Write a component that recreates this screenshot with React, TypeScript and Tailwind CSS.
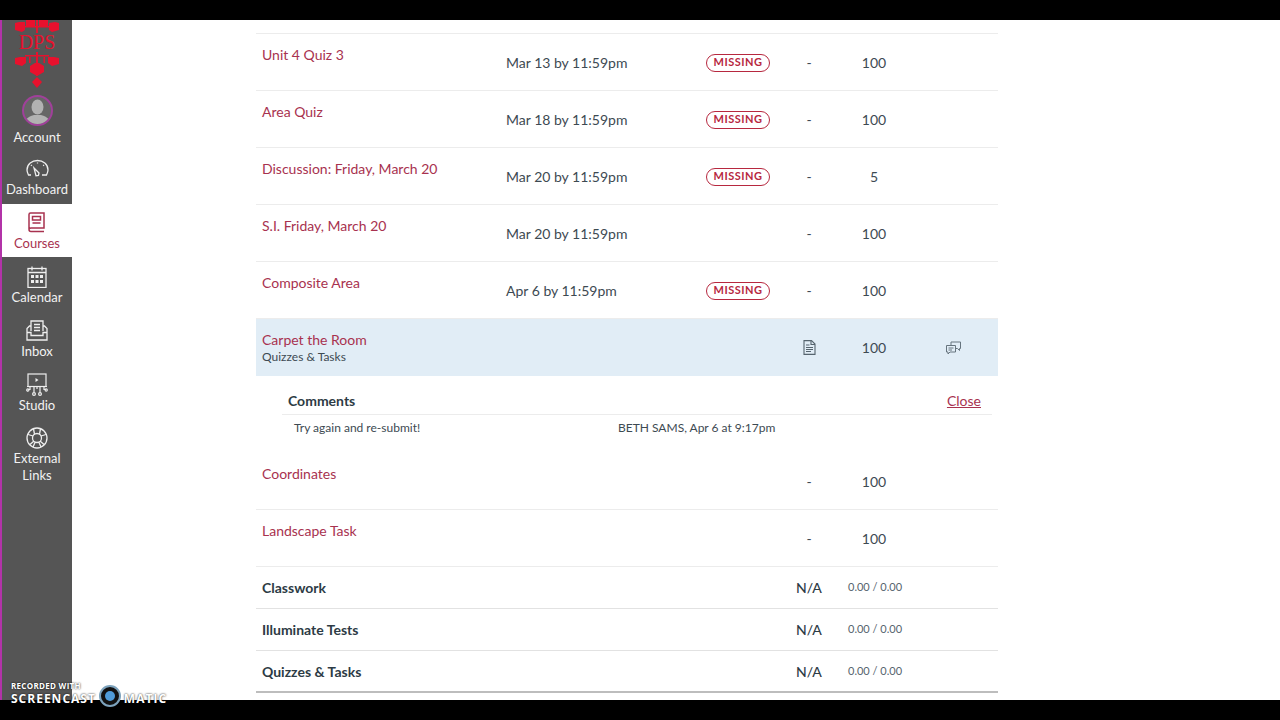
import React from "react";

const rowsTop = [
  { name: "Unit 4 Quiz 3", due: "Mar 13 by 11:59pm", missing: true, points: "100" },
  { name: "Area Quiz", due: "Mar 18 by 11:59pm", missing: true, points: "100" },
  { name: "Discussion: Friday, March 20", due: "Mar 20 by 11:59pm", missing: true, points: "5" },
  { name: "S.I. Friday, March 20", due: "Mar 20 by 11:59pm", missing: false, points: "100" },
  { name: "Composite Area", due: "Apr 6 by 11:59pm", missing: true, points: "100" },
];

const rowsBottom = [
  { name: "Coordinates", due: "", missing: false, points: "100" },
  { name: "Landscape Task", due: "", missing: false, points: "100" },
];

const groups = ["Classwork", "Illuminate Tests", "Quizzes & Tasks"];

const DpsLogo = () => (
  <svg width="44" height="70" viewBox="0 0 44 70" fill="#e8112d">
    <path d="M11 0h9v6h-9zM24 0h9v6h-9z" />
    <path d="M0 3l4-1h6v8l-3 2-7-2zM34 3l6-1 4 1v7l-7 2-3-2z" />
    <path d="M21 0h2v13h-2zM10 6h24v1.500H10z" />
    <text x="22" y="29" textAnchor="middle" fontSize="20" fontFamily="'Liberation Serif', serif">DPS</text>
    <path d="M0 38l5-1h6v6l-4 3-7-2zM33 37h6l5 1v6l-7 2-4-3z" />
    <path d="M10 35h24v1.500H10zM21 32h2v24h-2zM14 37h1.500v6H14zM28.500 37h1.500v6h-1.500z" />
    <path d="M15 46l5-3h4l5 3v6l-7 4-7-4z" />
    <path d="M22 57l5 5-5 6-5-6z" />
  </svg>
);

const Avatar = () => (
  <div className="w-[31px] h-[31px] rounded-full border-2 border-[#a0409a] bg-[#666] overflow-hidden">
    <svg width="27" height="27" viewBox="0 0 27 27" fill="#b2b2b2">
      <ellipse cx="13.500" cy="10" rx="6" ry="7.500" />
      <path d="M1 27c0-6 5-8 9-9h7c4 1 9 3 9 9z" />
    </svg>
  </div>
);

const DashIcon = () => (
  <svg width="23" height="20" viewBox="0 0 23 20" fill="none" stroke="#eee" strokeWidth="1.300">
    <path d="M5 16H2.500C1.500 14 1 12.500 1 11 1 5 6 1.500 11.500 1.500S22 5 22 11c0 1.500-.5 3-1.500 5H16" />
    <path d="M8 9l5 5-.5 2.500-2.500.2z" />
    <path d="M11.500 3.500v1M5 6l.8.8M18 6l-.8.8" />
  </svg>
);

const BookIcon = () => (
  <svg width="18" height="21" viewBox="0 0 18 21" fill="none" stroke="#a8324f" strokeWidth="1.500">
    <path d="M1 17V2.500C1 1.500 1.500 1 2.500 1H16v15H3c-1.500 0-2 .5-2 1.500S1.500 19.500 3 19.500H16" />
    <path d="M4.500 4.500h8v3.500h-8zM4.500 11h8" />
  </svg>
);

const CalIcon = () => (
  <svg width="20" height="22" viewBox="0 0 20 22" fill="none" stroke="#eee" strokeWidth="1.300">
    <rect x="1" y="2.500" width="18" height="19" />
    <path d="M1 6.500h18M5 .5v4M15 .5v4" />
    <path fill="#eee" stroke="none" d="M4 9h3v3H4zM8.500 9h3v3h-3zM13 9h3v3h-3zM4 14h3v3H4zM8.500 14h3v3h-3zM13 14h3v3h-3z" />
  </svg>
);

const InboxIcon = () => (
  <svg width="22" height="21" viewBox="0 0 22 21" fill="none" stroke="#eee" strokeWidth="1.300">
    <path d="M5 11V1h12v10" />
    <path d="M8 4.500h6M8 7.500h6M8 10.500h6" />
    <path d="M5 6H3.500L1 8.500V20h20V8.500L18.500 6H17" />
    <path d="M1 12.500h4v3h12v-3h4" />
  </svg>
);

const StudioIcon = () => (
  <svg width="22" height="23" viewBox="0 0 22 23" fill="none" stroke="#eee" strokeWidth="1.200">
    <rect x="2" y="1" width="18" height="12.500" />
    <path d="M9.500 5l3 2-3 2z" fill="#eee" stroke="none" />
    <path d="M1 13.500h20M4 14v2.500H2.500M8 14v5.500M14 14v5.500M18 14v2.500h1.500M11 14v2" />
    <circle cx="1.800" cy="17" r="1.100" />
    <circle cx="8" cy="21" r="1.400" />
    <circle cx="14" cy="21" r="1.400" />
    <circle cx="20.200" cy="17" r="1.100" />
  </svg>
);

const LifeIcon = () => (
  <svg width="22" height="22" viewBox="0 0 22 22" fill="none" stroke="#eee" strokeWidth="1.300">
    <circle cx="11" cy="11" r="10" />
    <circle cx="11" cy="11" r="4.500" />
    <path d="M7.500 2l1 5M14.500 2l-1 5M2 7.500l5 1.500M20 7.500l-5 1.500M4 17.500l4-3.500M18 17.500l-4-3.500M9 15.500l-2 4.500M13 15.500l2 4.500" />
  </svg>
);

const DocIcon = () => (
  <svg width="13" height="15" viewBox="0 0 13 15" fill="none" stroke="#56646e" strokeWidth="1.100">
    <path d="M1 .6h7.500L12 4v10.400H1z" />
    <path d="M8 1v3.500h4M3 5h3.500M3 7.500h7M3 9.500h7M3 11.500h5" />
  </svg>
);

const CommentIcon = () => (
  <svg width="15" height="14" viewBox="0 0 15 14" fill="none" stroke="#66747e" strokeWidth="1">
    <path d="M.5 4.500h9v6.500H4l-2 2v-2H.5z" />
    <path d="M5 4.500V1h9.500v6.500H13.500v2L11.500 7.500H9.500" />
    <path d="M2.500 7h5M2.500 9h3.500" />
  </svg>
);

const NavItem = ({ label, icon, active }: { label: string; icon: React.ReactNode; active?: boolean }) => (
  <div
    className={
      active
        ? "h-[53px] bg-white flex flex-col items-center pt-[7px] text-[#a8324f]"
        : "h-[54px] flex flex-col items-center pt-[7px] text-[#f2f2f2]"
    }
  >
    <div className="h-[23px] flex items-center justify-center">{icon}</div>
    <div className="text-[13px] leading-[17px] mt-[1px] text-center">{label}</div>
  </div>
);

const Row = ({ name, due, missing, points }: { name: string; due: string; missing: boolean; points: string }) => (
  <div className="flex h-[57px] border-b border-[#ececec] pl-1.5 text-[14px] text-[#3d4a52]">
    <div className="w-[244px] pt-[11px] text-[#a8324f] leading-[20px]">{name}</div>
    <div className="w-[200px] flex items-center pt-[1px]">{due}</div>
    <div className="w-[84px] flex items-center pt-[1px]">
      {missing && (
        <span className="h-[18px] w-[64px] rounded-full border border-[#b7283f] text-[#b7283f] text-[11px] font-bold tracking-[0.5px] flex items-center justify-center">
          MISSING
        </span>
      )}
    </div>
    <div className="w-[38px] flex items-center justify-center pt-[1px]">-</div>
    <div className="w-[92px] flex items-center justify-center pt-[1px]">{points}</div>
  </div>
);

export default function App() {
  return (
    <div className="w-[1280px] h-[720px] overflow-hidden relative flex flex-col bg-white font-['Lato',sans-serif]">
      <div className="h-5 bg-black shrink-0" />
      <div className="flex-1 flex min-h-0">
        <aside className="w-[72px] shrink-0 bg-[#555555] border-l-2 border-[#b233a8]">
          <div className="h-[72px] flex justify-center overflow-hidden pr-[1px]">
            <DpsLogo />
          </div>
          <div className="h-[58px] flex flex-col items-center pt-[3px] text-[#f2f2f2]">
            <Avatar />
            <div className="text-[13px] leading-[17px] mt-[3px]">Account</div>
          </div>
          <NavItem label="Dashboard" icon={<DashIcon />} />
          <NavItem label="Courses" icon={<BookIcon />} active />
          <div className="h-[1px]" />
          <NavItem label="Calendar" icon={<CalIcon />} />
          <NavItem label="Inbox" icon={<InboxIcon />} />
          <NavItem label="Studio" icon={<StudioIcon />} />
          <NavItem label="External Links" icon={<LifeIcon />} />
        </aside>

        <main className="w-[742px] ml-[184px]">
          <div className="h-[14px] border-b border-[#ececec]" />
          {rowsTop.map((r) => (
            <Row key={r.name} {...r} />
          ))}

          <div className="flex h-[57px] bg-[#e1edf6] pl-1.5 text-[14px] text-[#3d4a52]">
            <div className="w-[528px] pt-[11px]">
              <div className="text-[#a8324f] leading-[20px]">Carpet the Room</div>
              <div className="text-[12px] leading-[14px]">Quizzes &amp; Tasks</div>
            </div>
            <div className="w-[38px] flex items-center justify-center">
              <DocIcon />
            </div>
            <div className="w-[92px] flex items-center justify-center">100</div>
            <div className="w-[66px] flex items-center justify-center">
              <CommentIcon />
            </div>
          </div>

          <div className="h-[77px] pl-[26px] pr-1.5">
            <div className="h-[39px] flex items-end justify-between border-b border-[#ececec] pl-1.5 pr-[11px] pb-[3px]">
              <span className="text-[14px] font-bold text-[#2d3b45] leading-[20px]">Comments</span>
              <span className="text-[14px] text-[#a8324f] underline leading-[20px]">Close</span>
            </div>
            <div className="flex pl-3 pt-[5px] text-[12px] text-[#3d4a52] leading-[16px]">
              <span className="w-[324px]">Try again and re-submit!</span>
              <span>BETH SAMS, Apr 6 at 9:17pm</span>
            </div>
          </div>

          {rowsBottom.map((r) => (
            <Row key={r.name} {...r} />
          ))}

          {groups.map((g) => (
            <div key={g} className="flex items-center h-[42px] border-b border-[#e2e2e2] pl-1.5 last:border-b-2 last:border-[#bdbdbd]">
              <div className="w-[528px] text-[14px] font-bold text-[#2d3b45]">{g}</div>
              <div className="w-[38px] text-center text-[14px] font-medium text-[#2d3b45]">N/A</div>
              <div className="pl-[20px] text-[11px] text-[#56646e]">0.00 / 0.00</div>
            </div>
          ))}
        </main>
      </div>
      <div className="h-5 bg-black shrink-0" />

      {/* screencast-o-matic watermark sits over the page */}
      <div className="absolute left-[11px] top-[680px] text-white font-['Open_Sans',sans-serif] font-bold [text-shadow:0_0_2px_#000]">
        <div className="text-[8px] leading-[11px] tracking-[0.3px]">RECORDED WITH</div>
        <div className="flex items-center text-[12px] leading-[18px] tracking-[1px] mt-[-1px]">
          <span>SCREENCAST</span>
          <svg width="26" height="24" viewBox="0 0 26 24" className="mx-[1px] mt-[-6px]">
            <circle cx="13" cy="12" r="10" fill="#111" stroke="#7da3bd" strokeWidth="2" />
            <circle cx="13" cy="12" r="5" fill="#4f9bd9" />
          </svg>
          <span>MATIC</span>
        </div>
      </div>
    </div>
  );
}
